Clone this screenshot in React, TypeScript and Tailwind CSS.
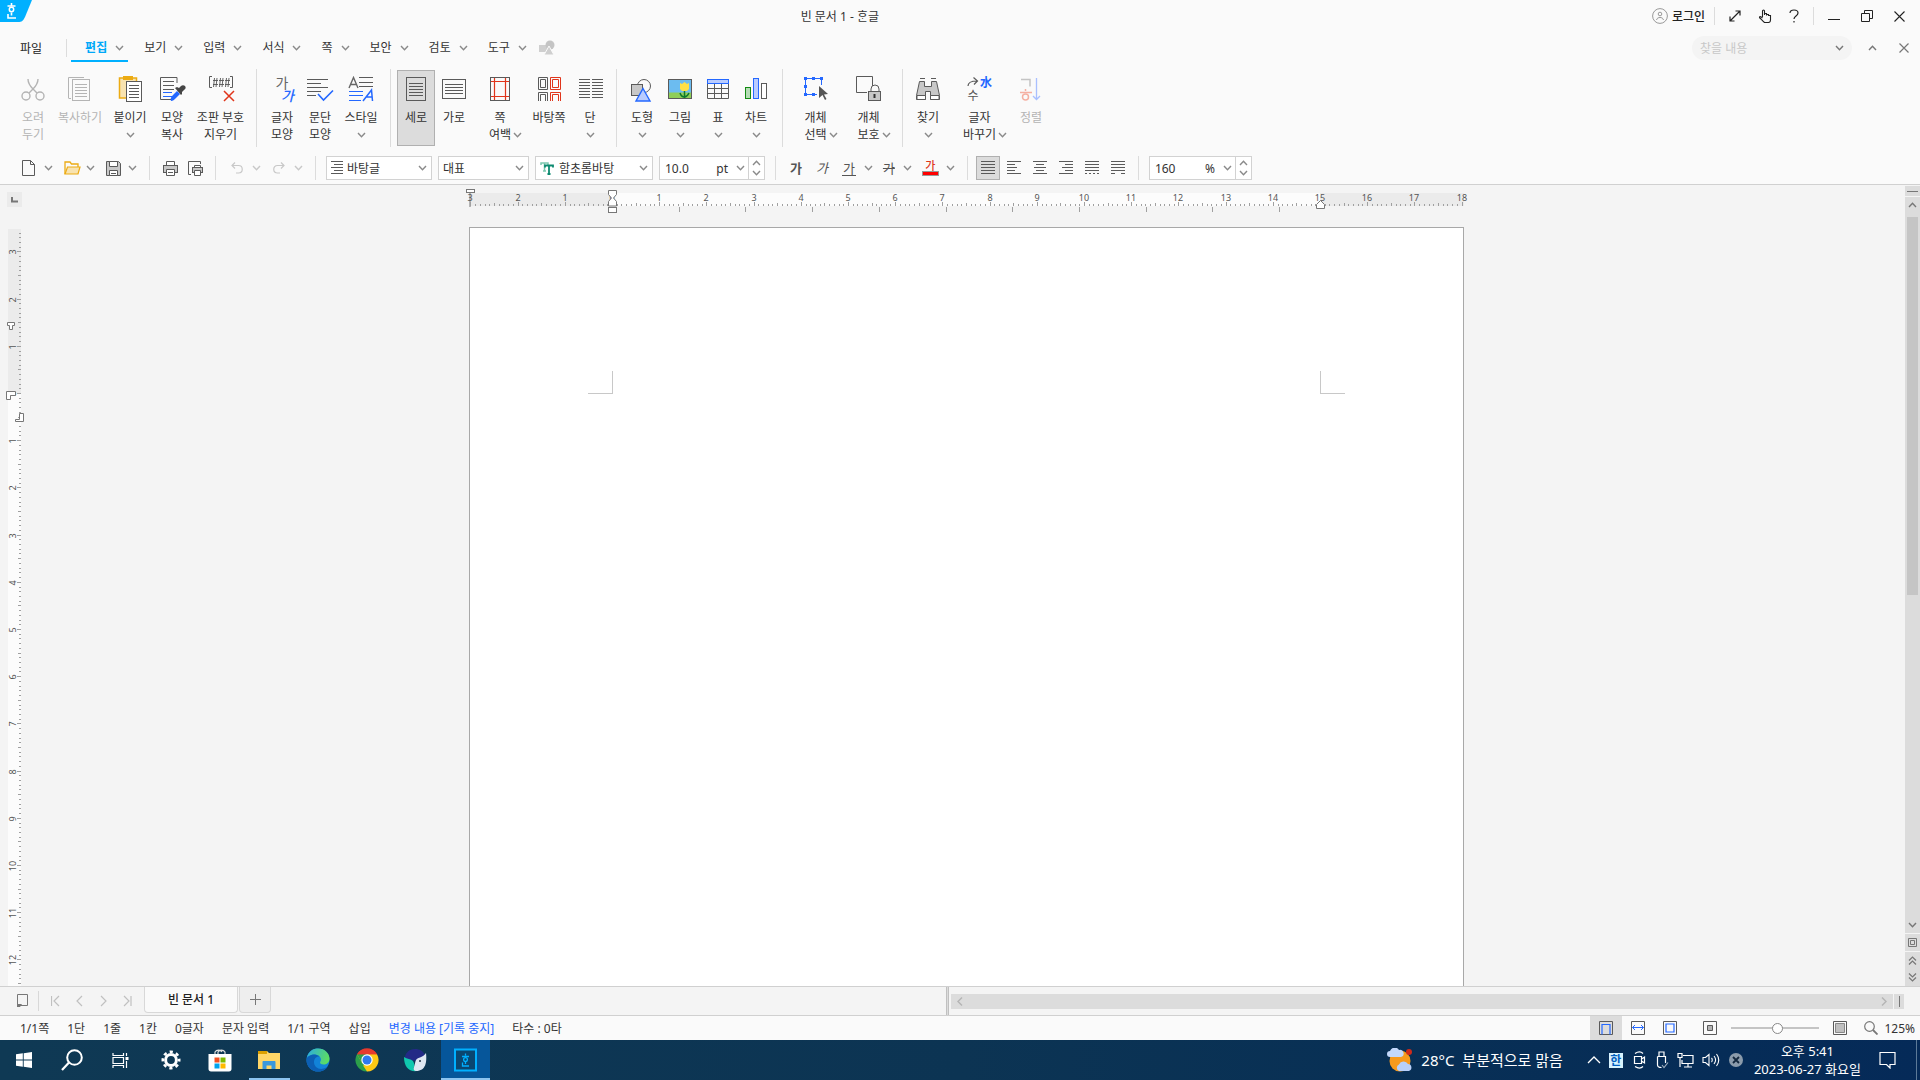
import React from "react";

type Kids = { children?: React.ReactNode };

const G = "#5a5a5a";
const B = "#2468ff";
const R = "#e0351b";

function Svg({ w, h = w, className, children }: Kids & { w: number; h?: number; className?: string }) {
  return (
    <svg width={w} height={h} viewBox={`0 0 ${w} ${h}`} fill="none" className={`shrink-0 ${className ?? ""}`} aria-hidden="true">
      {children}
    </svg>
  );
}

function Chevron({ className = "text-[#8a8a8a]" }: { className?: string }) {
  return (
    <Svg w={9} h={6} className={className}>
      <path d="M1 1l3.500 3.800L8 1" stroke="currentColor" strokeWidth="1.400" />
    </Svg>
  );
}

function Rows({ x1, x2, ys, c = G }: { x1: number; x2: number; ys: number[]; c?: string }) {
  return <path d={ys.map((y) => `M${x1} ${y + 0.5}H${x2}`).join("")} stroke={c} />;
}

/* ---------- ribbon icons ---------- */

const icons: Record<string, React.ReactNode> = {
  cut: (
    <Svg w={26}>
      <g stroke="#b4b4b4" strokeWidth="1.400">
        <circle cx="6" cy="20" r="4" />
        <circle cx="20" cy="20" r="4" />
        <path d="M8 3c0 4 2 7 5 10l4 4M18 3c0 4-2 7-5 10l-4 4" />
      </g>
    </Svg>
  ),
  copy: (
    <Svg w={26}>
      <path d="M1.500 22V1.500H17M1.500 22.500H4" stroke="#b4b4b4" />
      <rect x="5.500" y="3.500" width="17" height="21" stroke="#b4b4b4" fill="#fafafa" />
      <Rows x1={8} x2={20} ys={[8, 11, 14, 17, 20]} c="#b4b4b4" />
    </Svg>
  ),
  paste: (
    <Svg w={26}>
      <rect x="2.500" y="2" width="17" height="20" fill="#f8e3b0" stroke="#ecab13" strokeWidth="1.500" />
      <rect x="6" y="0" width="10" height="4" fill="#ecab13" />
      <rect x="9.500" y="5.500" width="15" height="20" fill="#fff" stroke={G} />
      <Rows x1={12} x2={22} ys={[9, 12, 15, 18, 21]} />
    </Svg>
  ),
  brush: (
    <Svg w={28} h={26}>
      <path d="M19 7V1.500H2.500V23.500H14" stroke={G} />
      <Rows x1={5} x2={16} ys={[5, 9, 13]} />
      <Rows x1={5} x2={14} ys={[16, 20]} c={B} />
      <path d="M13 25c-1-2 0-4 2-6l4-4 3 3-4 4c-2 2-3 3-5 3z" fill={B} />
      <path d="M17 12l2-1 2 1 2-2c1-1 3-1 4 0s1 3-1 4l-2 2v2l-1 1z" fill="#454545" />
    </Svg>
  ),
  marks: (
    <Svg w={28} h={28}>
      <path d="M5 1.500H2.500V12.500H5M23 1.500H25.500V12.500H23" stroke={G} />
      <path d="M6 5.500h5M6 9.500h5M7.500 3l-1 9M10 3l-1 9M12 5.500h5M12 9.500h5M13.500 3l-1 9M16 3l-1 9M18 5.500h5M18 9.500h5M19.500 3l-1 9M22 3l-1 9" stroke="#555" strokeWidth=".9" />
      <path d="M17 16l10 10M27 16L17 26" stroke={R} strokeWidth="1.500" />
    </Svg>
  ),
  para: (
    <Svg w={28} h={26}>
      <Rows x1={1} x2={22} ys={[3, 11]} />
      <Rows x1={1} x2={15} ys={[7, 15]} />
      <Rows x1={1} x2={10} ys={[19]} />
      <path d="M12 18l5.500 6L27 14.500" stroke={B} strokeWidth="1.600" />
    </Svg>
  ),
  style: (
    <Svg w={28} h={26}>
      <path d="M2 12L6.500 1.500 11 12M3.800 8.500h5.700" stroke="#666" strokeWidth="1.400" />
      <Rows x1={12} x2={26} ys={[1, 6, 10]} />
      <Rows x1={2} x2={16} ys={[15, 19]} c={B} />
      <Rows x1={2} x2={14} ys={[24]} c={B} />
      <path d="M16 25l8.500-11 1 11M19.500 21h6" stroke={B} strokeWidth="1.500" />
    </Svg>
  ),
  portrait: (
    <Svg w={26}>
      <rect x="3.500" y="1.500" width="19" height="23" stroke={G} />
      <Rows x1={6} x2={20} ys={[7, 10, 13, 16, 19]} />
    </Svg>
  ),
  landscape: (
    <Svg w={26}>
      <rect x="1.500" y="3.500" width="23" height="19" stroke={G} />
      <Rows x1={4} x2={22} ys={[8, 11, 14, 17]} />
    </Svg>
  ),
  margin: (
    <Svg w={26}>
      <rect x="3.500" y="1.500" width="19" height="23" stroke={G} />
      <path d="M7.500 2v22M18.500 2v22M4 5.500h18M4 20.500h18" stroke={R} strokeWidth="1.200" />
    </Svg>
  ),
  master: (
    <Svg w={26}>
      <path d="M2.500 1.500h9v12h-9zM4.500 3.500h5v8h-5zM2.500 25V16.500h9V25M4.500 25V18.500h5V25" stroke={G} />
      <path d="M14.500 1.500h10v12h-10zM16.500 3.500h6v8h-6zM14.500 25V16.500h10V25M16.500 25V18.500h6V25" stroke={R} />
    </Svg>
  ),
  columns: (
    <Svg w={26}>
      <Rows x1={2} x2={13} ys={[3, 6, 9, 12, 15, 18, 21]} />
      <Rows x1={15} x2={26} ys={[3, 6, 9, 12, 15, 18, 21]} />
    </Svg>
  ),
  shapes: (
    <Svg w={26}>
      <circle cx="15" cy="10" r="6.500" stroke={G} />
      <rect x="2.500" y="8.500" width="11" height="11" fill="#c8c8c8" stroke={G} />
      <path d="M14 12.500L21 25H7z" fill="#b9ccff" stroke={B} strokeWidth="1.400" />
    </Svg>
  ),
  picture: (
    <Svg w={26}>
      <rect x="1.500" y="3.500" width="23" height="19" fill="#6cbcf0" stroke={G} />
      <path d="M2 16.500h22V22H2z" fill="#8fce58" />
      <path d="M17.500 14v8M13 17c1 3 3 4 4.500 4s3-1 4.500-4" stroke="#0d7a2b" strokeWidth="1.500" />
      <path d="M13 7l2 1 2.500-2L20 8l2-1v6l-2 2h-5l-2-2z" fill="#ffe046" />
    </Svg>
  ),
  table: (
    <Svg w={26}>
      <path d="M2.500 8v14.500h21V8M2.500 12.500h21M2.500 17.500h21M9.500 8v14M16.500 8v14" stroke={G} />
      <rect x="2.500" y="3.500" width="21" height="4" fill="#b9ccff" stroke={B} />
    </Svg>
  ),
  chart: (
    <Svg w={26}>
      <rect x="2.500" y="11.500" width="5" height="11" fill="#b4dcb4" stroke="#138a13" />
      <rect x="10.500" y="2.500" width="5" height="20" fill="#b9ccff" stroke={B} />
      <rect x="18.500" y="7.500" width="5" height="15" fill="#fff" stroke={G} />
    </Svg>
  ),
  select: (
    <Svg w={28} h={28}>
      <path d="M19.500 10V3.500H3.500V19.500H15" stroke={B} />
      <path d="M2 2h3v3H2zM10 2h3v3h-3zM18 2h3v3h-3zM2 10h3v3H2zM2 18h3v3H2zM10 18h3v3h-3z" fill={B} />
      <path d="M17 11l9 8-4 .500 2.500 4.500-1.500 1-2.500-5-3.500 3z" fill="#555" />
    </Svg>
  ),
  protect: (
    <Svg w={28} h={28}>
      <path d="M12 17.500H1.500v-16h16V11" stroke={G} />
      <path d="M16 16v-2a4 4 0 018 0v2" stroke={G} />
      <rect x="13.500" y="16.500" width="12" height="9" fill="#c8c8c8" stroke={G} />
      <path d="M19.500 19v4" stroke="#333" strokeWidth="2" />
    </Svg>
  ),
  find: (
    <Svg w={26}>
      <path d="M5 2.500h5M16 2.500h5" stroke={G} />
      <path d="M4.500 5.500h5v5h7v-5h5l3 14v4h-9v-8h-5v8h-9v-4z" fill="#c8c8c8" stroke={G} />
      <path d="M2 19.500h8.500v4H2zM15.500 19.500H24v4h-8.500z" fill="#fff" stroke={G} />
    </Svg>
  ),
  sort: (
    <Svg w={26}>
      <path d="M3 3.500h9v7" stroke="#c4c4c4" strokeWidth="1.500" />
      <path d="M7.500 13v2M2 16.500h12" stroke="#f5b0a2" strokeWidth="1.500" />
      <circle cx="7.500" cy="21" r="3" stroke="#f5b0a2" strokeWidth="1.500" />
      <path d="M18.500 2v21M15 20l3.500 3.500L22 20" stroke="#a9bfff" strokeWidth="1.300" />
    </Svg>
  ),
};

const charIcon = (
  <span className="flex h-[26px] w-6 flex-col text-[14px] leading-[13px]">
    <span className="text-[#666]">가</span>
    <span className="self-end font-medium text-[#2468ff] italic">가</span>
  </span>
);

const replaceIcon = (
  <span className="grid h-[26px] w-[26px] grid-cols-2 text-[12px] leading-[13px]">
    <Svg w={12} h={13}>
      <path d="M1 10c0-3 3-5 9-5M6.500 1.500L10.500 5 7 8.500" stroke={G} strokeWidth="1.200" />
    </Svg>
    <span className="font-bold text-[#2468ff]">水</span>
    <span className="text-[#555]">수</span>
  </span>
);

type RibbonItem = {
  w: string;
  icon: React.ReactNode;
  lines: string[];
  chev?: "below" | "side";
  off?: boolean;
  on?: boolean;
};

const ribbon: RibbonItem[][] = [
  [
    { w: "w-[38px]", icon: icons.cut, lines: ["오려", "두기"], off: true },
    { w: "w-14", icon: icons.copy, lines: ["복사하기"], off: true },
    { w: "w-11", icon: icons.paste, lines: ["붙이기"], chev: "below" },
    { w: "w-10", icon: icons.brush, lines: ["모양", "복사"] },
    { w: "w-[57px]", icon: icons.marks, lines: ["조판 부호", "지우기"] },
  ],
  [
    { w: "w-[38px]", icon: charIcon, lines: ["글자", "모양"] },
    { w: "w-[38px]", icon: icons.para, lines: ["문단", "모양"] },
    { w: "w-11", icon: icons.style, lines: ["스타일"], chev: "below" },
  ],
  [
    { w: "w-[38px]", icon: icons.portrait, lines: ["세로"], on: true },
    { w: "w-[38px]", icon: icons.landscape, lines: ["가로"] },
    { w: "w-[54px]", icon: icons.margin, lines: ["쪽", "여백"], chev: "side" },
    { w: "w-11", icon: icons.master, lines: ["바탕쪽"] },
    { w: "w-[38px]", icon: icons.columns, lines: ["단"], chev: "below" },
  ],
  [
    { w: "w-[38px]", icon: icons.shapes, lines: ["도형"], chev: "below" },
    { w: "w-[38px]", icon: icons.picture, lines: ["그림"], chev: "below" },
    { w: "w-[38px]", icon: icons.table, lines: ["표"], chev: "below" },
    { w: "w-[38px]", icon: icons.chart, lines: ["차트"], chev: "below" },
  ],
  [
    { w: "w-[53px]", icon: icons.select, lines: ["개체", "선택"], chev: "side" },
    { w: "w-[53px]", icon: icons.protect, lines: ["개체", "보호"], chev: "side" },
  ],
  [
    { w: "w-[38px]", icon: icons.find, lines: ["찾기"], chev: "below" },
    { w: "w-[65px]", icon: replaceIcon, lines: ["글자", "바꾸기"], chev: "side" },
    { w: "w-[38px]", icon: icons.sort, lines: ["정렬"], off: true },
  ],
];

function RibbonButton({ item }: { item: RibbonItem }) {
  const last = item.lines.length - 1;
  return (
    <button
      type="button"
      aria-pressed={item.on}
      disabled={item.off}
      className={`flex h-[76px] shrink-0 flex-col items-center border pt-[5px] ${item.w} ${
        item.on ? "border-[#b0b0b0] bg-[#dcdcdc]" : "border-transparent"
      } ${item.off ? "text-[#b4b4b4]" : "text-[#333]"}`}
    >
      <span className="mb-[7px] flex h-[26px] items-center justify-center">{item.icon}</span>
      {item.lines.map((line, i) => (
        <span key={line} className="flex h-[17px] items-center justify-center leading-[17px] whitespace-nowrap">
          {item.chev === "side" && i === last ? (
            <span className="flex items-center gap-0.5 pl-[11px]">
              {line}
              <Chevron />
            </span>
          ) : (
            line
          )}
        </span>
      ))}
      {item.chev === "below" && (
        <span className="flex h-[17px] items-center">
          <Chevron />
        </span>
      )}
    </button>
  );
}

/* ---------- title bar and menu ---------- */

function TitleBar() {
  return (
    <header className="grid h-8 shrink-0 grid-cols-[10fr_auto_13fr] items-center">
      <Svg w={32} h={22} className="self-start">
        <path d="M0 0h32l-7 17c-2 4-3 5-7 5H0z" fill="#00b0ff" />
        <path d="M11.500 3v2.500M7.500 6h8M8 14v4h8M11.500 12.500v3" stroke="#fff" strokeWidth="1.600" />
        <circle cx="11.500" cy="9.500" r="2.200" stroke="#fff" strokeWidth="1.500" />
      </Svg>
      <h1 className="text-[#333]">빈 문서 1 - ᄒᆞᆫ글</h1>
      <div className="flex items-center justify-end pr-[15px] text-[#222]">
        <button type="button" className="flex items-center gap-1 font-medium">
          <Svg w={16}>
            <circle cx="8" cy="8" r="7.400" stroke="#999" />
            <circle cx="8" cy="6" r="1.800" stroke="#999" />
            <path d="M4.500 12c.500-2 2-2.500 3.500-2.500s3 .500 3.500 2.500" stroke="#999" />
          </Svg>
          로그인
        </button>
        <span className="mr-[14px] ml-[9px] h-[18px] w-px bg-[#dcdcdc]" />
        <div className="flex items-center gap-[17px]">
          <button type="button" aria-label="전체 화면">
            <Svg w={12}>
              <path d="M1 11L11 1M6.500 1H11v4.500M1 6.500V11h4.500" stroke="currentColor" strokeWidth="1.200" />
            </Svg>
          </button>
          <button type="button" aria-label="터치 모드">
            <Svg w={14}>
              <path d="M4.500 8V2a1 1 0 012 0v4M6.500 6V4.500h2V6.500M8.500 5.500h2V7M10.500 6.500h2V11c0 1-.5 2.500-2 2.500H6.500C5 12.500 3 10 1.500 8.500c0-1 1-1.500 3 .5" stroke="currentColor" strokeWidth="1.100" />
            </Svg>
          </button>
          <button type="button" aria-label="도움말">
            <Svg w={10} h={14}>
              <path d="M1 4c0-2 1.500-3 4-3s4 1 4 3c0 3-4 3-4 6M5 12v1.500" stroke="currentColor" strokeWidth="1.200" />
            </Svg>
          </button>
        </div>
        <span className="mr-[14px] ml-[14px] h-[18px] w-px bg-[#dcdcdc]" />
        <div className="flex items-center gap-[21px]">
          <button type="button" aria-label="최소화">
            <Svg w={12}>
              <path d="M0 9.500h12" stroke="currentColor" />
            </Svg>
          </button>
          <button type="button" aria-label="이전 크기로">
            <Svg w={12}>
              <path d="M.5 3.500h8v8h-8zM3.500 3V.5h8v8H9" stroke="currentColor" />
            </Svg>
          </button>
          <button type="button" aria-label="닫기">
            <Svg w={11}>
              <path d="M.5.500l10 10M10.500.500l-10 10" stroke="currentColor" strokeWidth="1.100" />
            </Svg>
          </button>
        </div>
      </div>
    </header>
  );
}

function MenuBar() {
  const items = ["편집", "보기", "입력", "서식", "쪽", "보안", "검토", "도구"];
  return (
    <nav className="flex h-8 shrink-0 items-center">
      <button type="button" className="pl-5 text-[#222]">
        파일
      </button>
      <span className="mr-1 ml-6 h-[18px] w-px bg-[#dcdcdc]" />
      <div className="flex gap-0.5">
        {items.map((m, i) => (
          <button
            key={m}
            type="button"
            className={`flex h-7 items-center gap-2 border-b-2 pt-px pr-1 pl-[14px] ${
              i === 0 ? "border-[#00b0ff] font-bold text-[#00a8f8]" : "border-transparent text-[#333]"
            }`}
          >
            {m}
            <Chevron />
          </button>
        ))}
      </div>
      <Svg w={16} className="ml-2">
        <rect x="0" y="5" width="8" height="7" fill="#cfcfcf" />
        <circle cx="11" cy="5" r="4.500" fill="#c4c4c4" />
        <path d="M10 6l5 9H5z" fill="#cfcfcf" stroke="#fafafa" />
      </Svg>
      <div className="ml-auto flex items-center pr-[11px]">
        <label className="flex h-6 w-40 items-center rounded-full bg-[#f4f4f4] px-2">
          <input aria-label="찾을 내용" placeholder="찾을 내용" className="w-full min-w-0 bg-transparent outline-none placeholder:text-[#c8c8c8]" />
          <Chevron className="text-[#777]" />
        </label>
        <button type="button" aria-label="메뉴 접기" className="ml-4">
          <Chevron className="rotate-180 text-[#777]" />
        </button>
        <button type="button" aria-label="문서 닫기" className="ml-[22px]">
          <Svg w={10}>
            <path d="M.5.500l9 9M9.500.500l-9 9" stroke="#777" strokeWidth="1.200" />
          </Svg>
        </button>
      </div>
    </nav>
  );
}

/* ---------- formatting toolbar ---------- */

function Divider() {
  return <span className="h-6 w-px shrink-0 bg-[#dcdcdc]" />;
}

function Picker({ label, value, w, pad, icon }: { label: string; value: string; w: string; pad: string; icon?: React.ReactNode }) {
  return (
    <label className={`relative flex h-6 shrink-0 items-center border border-[#d2d2d2] bg-white ${w}`}>
      {icon && <span className="absolute left-1">{icon}</span>}
      <select aria-label={label} className={`h-full w-full appearance-none bg-transparent text-[#333] outline-none ${pad}`}>
        <option>{value}</option>
      </select>
      <span className="pointer-events-none absolute right-1">
        <Chevron />
      </span>
    </label>
  );
}

function Spin({ label, value, unit, w }: { label: string; value: string; unit: string; w: string }) {
  return (
    <div className={`flex h-6 shrink-0 items-center border border-[#d2d2d2] bg-white text-[#333] ${w}`}>
      <input aria-label={label} defaultValue={value} className="w-0 min-w-0 flex-1 bg-transparent pl-[5px] outline-none" />
      <span className="mr-2">{unit}</span>
      <button type="button" aria-label={`${label} 목록`} className="mr-[3px]">
        <Chevron />
      </button>
      <div className="flex h-full w-4 flex-col items-center justify-evenly border-l border-[#d2d2d2]">
        <button type="button" aria-label={`${label} 늘리기`}>
          <Chevron className="rotate-180 text-[#8a8a8a]" />
        </button>
        <button type="button" aria-label={`${label} 줄이기`}>
          <Chevron />
        </button>
      </div>
    </div>
  );
}

function Tool({ label, gap = "gap-[9px]", chev, faded, children }: Kids & { label: string; gap?: string; chev?: boolean; faded?: boolean }) {
  return (
    <button type="button" aria-label={label} disabled={faded} className={`flex h-6 shrink-0 items-center ${gap}`}>
      {children}
      {chev && <Chevron className={faded ? "text-[#c8c8c8]" : "text-[#8a8a8a]"} />}
    </button>
  );
}

const alignRows: { label: string; rows: [number, number][]; extra?: "dots" | "ends" }[] = [
  { label: "양쪽 정렬", rows: [[0, 14], [0, 14], [0, 14], [0, 14], [0, 14]] },
  { label: "왼쪽 정렬", rows: [[0, 14], [0, 8], [0, 10], [0, 8], [0, 14]] },
  { label: "가운데 정렬", rows: [[0, 14], [3, 11], [1, 13], [3, 11], [0, 14]] },
  { label: "오른쪽 정렬", rows: [[0, 14], [6, 14], [3, 14], [6, 14], [0, 14]] },
  { label: "배분 정렬", rows: [[0, 14], [0, 14], [0, 14], [0, 14]], extra: "dots" },
  { label: "나눔 정렬", rows: [[0, 14], [0, 14], [0, 14], [0, 14]], extra: "ends" },
];

function FormatBar() {
  return (
    <div className="flex h-[33px] shrink-0 items-center border-b border-[#d0d0d0] pl-[22px]">
      <div className="mr-3 flex items-center gap-[11px]">
        <Tool label="새 문서" chev>
          <Svg w={13} h={16}>
            <path d="M.5.500h8l4 4v11H.5zM8.500.500v4h4" stroke={G} />
          </Svg>
        </Tool>
        <Tool label="불러오기" gap="gap-[5px]" chev>
          <Svg w={17} h={14}>
            <path d="M1 13V1h5l1.500 2H14v3" stroke="#ecab13" strokeWidth="1.300" />
            <path d="M1 13l2.500-7H16l-2 7z" fill="#f8e3b0" stroke="#ecab13" strokeWidth="1.200" />
          </Svg>
        </Tool>
        <Tool label="저장" gap="gap-[7px]" chev>
          <Svg w={15}>
            <path d="M.5.500h12l2 2v12H.5z" fill="#c8c8c8" stroke={G} />
            <path d="M3.500.500h8v5h-8zM3.500 9.500h8v5h-8z" fill="#fff" stroke={G} />
            <path d="M5 12.500h5" stroke={G} />
          </Svg>
        </Tool>
      </div>
      <Divider />
      <div className="mr-3 ml-[13px] flex items-center gap-[10px]">
        <Tool label="인쇄">
          <Svg w={15}>
            <path d="M3.500 5V.500h8V5" fill="#fff" stroke={G} />
            <rect x=".5" y="4.500" width="14" height="7" fill="#c8c8c8" stroke={G} />
            <path d="M3.500 8.500h8v6h-8z" fill="#fff" stroke={G} />
            <path d="M5 11.500h5" stroke={G} />
          </Svg>
        </Tool>
        <Tool label="미리 보기">
          <Svg w={15}>
            <path d="M3 13.500H.5V.500h12V3" stroke={G} />
            <path d="M6.500 7V4.500h6V7" fill="#fff" stroke={G} />
            <rect x="4.500" y="6.500" width="10" height="5" fill="#c8c8c8" stroke={G} />
            <path d="M6.500 9.500h6v5h-6z" fill="#fff" stroke={G} />
          </Svg>
        </Tool>
      </div>
      <Divider />
      <div className="mr-3 ml-[15px] flex items-center gap-3">
        <Tool label="되돌리기" chev faded>
          <Svg w={12}>
            <path d="M4 .500L1 3.500l3 3M1 3.500h6.500c5 0 5 7.500 0 7.500H5" stroke="#c8c8c8" strokeWidth="1.200" />
          </Svg>
        </Tool>
        <Tool label="다시 실행" chev faded>
          <Svg w={12}>
            <path d="M8 .500l3 3-3 3M11 3.500H4.500c-5 0-5 7.500 0 7.500H7" stroke="#c8c8c8" strokeWidth="1.200" />
          </Svg>
        </Tool>
      </div>
      <Divider />
      <div className="mr-[10px] ml-[10px] flex items-center gap-1.5">
        <Picker
          label="스타일"
          value="바탕글"
          w="w-[106px]"
          pad="pl-5"
          icon={
            <Svg w={13} h={14}>
              <Rows x1={0} x2={12} ys={[0, 6, 12]} />
              <Rows x1={3} x2={12} ys={[3, 9]} />
            </Svg>
          }
        />
        <Picker label="언어" value="대표" w="w-[91px]" pad="pl-1" />
        <Picker
          label="글꼴"
          value="함초롬바탕"
          w="w-[118px]"
          pad="pl-[23px]"
          icon={
            <Svg w={14} h={13}>
              <path d="M1 3V1h7v2M4.500 1v8M3 9h3" stroke="#7cc8b0" strokeWidth="1.500" />
              <path d="M5 5.500V3.500h8v2M9 3.500V12M7.500 12h3" stroke="#0d8a70" strokeWidth="1.800" />
            </Svg>
          }
        />
        <Spin label="글자 크기" value="10.0" unit="pt" w="w-[106px]" />
      </div>
      <Divider />
      <div className="mr-[10px] ml-[14px] flex items-center gap-[14px] text-[13px] text-[#555]">
        <Tool label="진하게">
          <span className="font-bold">가</span>
        </Tool>
        <Tool label="기울임">
          <span className="italic">가</span>
        </Tool>
        <Tool label="밑줄" gap="gap-2" chev>
          <span className="border-b border-[#555] px-px leading-[14px]">가</span>
        </Tool>
      </div>
      <div className="mr-3 flex items-center gap-[10px] text-[13px] text-[#555]">
        <Tool label="취소선" gap="gap-2" chev>
          <span className="line-through">가</span>
        </Tool>
        <Tool label="글자 색" gap="gap-[7px]" chev>
          <span className="flex w-[17px] flex-col items-center text-[11px] leading-[11px] font-medium text-[#e0351b]">
            가<span className="h-[5px] w-full border border-[#999] bg-[#ff0000]" />
          </span>
        </Tool>
      </div>
      <Divider />
      <div className="mr-2 ml-2 flex items-center gap-0.5">
        {alignRows.map((a, i) => (
          <button
            key={a.label}
            type="button"
            aria-label={a.label}
            aria-pressed={i === 0}
            className={`flex h-6 w-6 items-center justify-center border ${i === 0 ? "border-[#b0b0b0] bg-[#dcdcdc]" : "border-transparent"}`}
          >
            <Svg w={14} h={14}>
              {a.rows.map(([x1, x2], r) => (
                <Rows key={r} x1={x1} x2={x2} ys={[r * 3]} />
              ))}
              {a.extra === "dots" && <path d="M0 12.500h14" stroke={G} strokeDasharray="2 2" />}
              {a.extra === "ends" && <path d="M0 12.500h4M10 12.500h4" stroke={G} />}
            </Svg>
          </button>
        ))}
      </div>
      <Divider />
      <span className="w-[10px]" />
      <Spin label="줄 간격" value="160" unit="%" w="w-[103px]" />
    </div>
  );
}

/* ---------- rulers ---------- */

const CM = 47.2;

function ticks(from: number, to: number) {
  const out: { mm: number; len: number }[] = [];
  for (let mm = from; mm <= to; mm++) {
    out.push({ mm, len: mm % 10 === 0 ? 4 : mm % 5 === 0 ? 3 : 2 });
  }
  return out;
}

function HorizontalRuler() {
  const zero = 143;
  const at = (cm: number) => Math.round(zero + cm * CM);
  return (
    <svg width="995" height="42" className="block shrink-0 overflow-visible" aria-hidden="true">
      <rect x="0" y="8" width="995" height="13" fill="#ebebeb" />
      <rect x={zero} y="8" width={at(15) - zero} height="13" fill="#fcfcfc" />
      <rect x="0" y="8" width="2" height="14" fill="#b4b4b4" />
      {ticks(-30, 180).map((t) => (
        <rect key={t.mm} x={at(t.mm / 10)} y={21 - t.len} width="1" height={t.len} fill="#a0a0a0" />
      ))}
      {Array.from({ length: 10 }, (_, i) => (
        <rect key={i} x={Math.round(zero + (i + 1) * 66.7)} y="22" width="1" height="5" fill="#a0a0a0" />
      ))}
      {Array.from({ length: 22 }, (_, i) => i - 3).map((n) => (
        <text key={n} x={at(n)} y="16" textAnchor="middle" fontSize="9" fill="#555">
          {Math.abs(n)}
        </text>
      ))}
      <g fill="#fff" stroke="#777">
        <rect x="-2.500" y="4.500" width="8" height="3" />
        <path d="M139.500 5.500h8v4l-3 3.500 3 3.500v4.500h-8v-4.500l3-3.500-3-3.500z" />
        <rect x="139.500" y="22.500" width="8" height="5" />
        <path d="M847.500 23.500v-4l4-4 4 4v4z" />
      </g>
    </svg>
  );
}

function VerticalRuler() {
  const zero = 164;
  const at = (cm: number) => Math.round(zero + cm * CM);
  return (
    <svg width="25" height="100%" className="block min-h-0 flex-1" aria-hidden="true">
      <rect x="8" y="0" width="13" height="100%" fill="#fcfcfc" />
      <rect x="8" y="0" width="13" height={zero} fill="#ebebeb" />
      {ticks(-34, 240).map((t) => (
        <rect key={t.mm} x={21 - t.len} y={at(t.mm / 10)} width={t.len} height="1" fill="#a0a0a0" />
      ))}
      {Array.from({ length: 16 }, (_, i) => i - 3).map((n) => (
        <text key={n} transform={`translate(16 ${at(n) + 1}) rotate(-90)`} textAnchor="middle" fontSize="9" fill="#555">
          {Math.abs(n)}
        </text>
      ))}
      <g fill="#fff" stroke="#777">
        <path d="M7.500 93.500h7v3h-2v4h-3v-4h-2z" />
        <path d="M6.500 162.500h9v4h-5v4h-4z" />
        <path d="M15.500 190.500h4v-6h4v8h-8z" />
      </g>
    </svg>
  );
}

function ScrollColumn() {
  return (
    <div className="flex w-[15px] shrink-0 flex-col gap-px pt-px text-[#777]">
      <button type="button" aria-label="창 나누기" className="flex h-[10px] items-center justify-center bg-[#dcdcdc]">
        <span className="h-px w-[11px] bg-[#777]" />
      </button>
      <div className="flex min-h-0 flex-1 flex-col bg-[#dcdcdc]">
        <button type="button" aria-label="위로" className="flex h-5 items-center justify-center pb-1">
          <Chevron className="rotate-180 text-[#777]" />
        </button>
        <div className="min-h-0 flex-1 px-0.5">
          <div className="h-[54%] bg-[#c5c5c5]" />
        </div>
        <button type="button" aria-label="아래로" className="flex h-4 items-center justify-center">
          <Chevron className="text-[#777]" />
        </button>
      </div>
      <button type="button" aria-label="보기 선택" className="flex h-[17px] items-center justify-center bg-[#dcdcdc]">
        <Svg w={9}>
          <path d="M.5.500h8v8h-8zM2.500 2.500h4v4h-4z" stroke="#777" />
        </Svg>
      </button>
      <div className="flex flex-col bg-[#dcdcdc]">
        <button type="button" aria-label="이전 쪽" className="flex h-[17px] items-center justify-center">
          <Svg w={9} h={9}>
            <path d="M1 4.500L4.500 1 8 4.500M1 8.500L4.500 5 8 8.500" stroke="#777" strokeWidth="1.200" />
          </Svg>
        </button>
        <button type="button" aria-label="다음 쪽" className="flex h-[17px] items-center justify-center">
          <Svg w={9} h={9}>
            <path d="M1 .500L4.500 4 8 .500M1 4.500L4.500 8 8 4.500" stroke="#777" strokeWidth="1.200" />
          </Svg>
        </button>
      </div>
    </div>
  );
}

function Workspace() {
  return (
    <main className="flex min-h-0 flex-1 bg-[#f4f4f4]">
      <div className="flex w-[25px] shrink-0 flex-col overflow-hidden">
        <div className="mt-[7px] mb-[22px] ml-[7px] h-[15px] w-[15px] shrink-0 bg-[#ebebeb]">
          <Svg w={15}>
            <path d="M5 5v4.500h6" stroke="#777" strokeWidth="2" />
          </Svg>
        </div>
        <VerticalRuler />
      </div>
      <div className="flex min-w-0 flex-1 justify-center overflow-hidden pl-0.5">
        <div className="flex w-[995px] shrink-0 flex-col">
          <HorizontalRuler />
          <article className="flex min-h-0 flex-1 items-start justify-between border border-b-0 border-[#a8a8a8] bg-white px-[118px] pt-[143px]">
            <span className="h-[23px] w-[25px] border-r border-b border-[#c8c8c8]" />
            <span className="h-[23px] w-[25px] border-b border-l border-[#c8c8c8]" />
          </article>
        </div>
      </div>
      <ScrollColumn />
    </main>
  );
}

/* ---------- document tabs and status bar ---------- */

function TabStrip() {
  const nav: [string, string][] = [
    ["처음 탭", "M.5 1v10M8 1L3 6l5 5"],
    ["이전 탭", "M7 1L2 6l5 5"],
    ["다음 탭", "M2 1l5 5-5 5"],
    ["마지막 탭", "M8 1v10M1 1l5 5-5 5"],
  ];
  return (
    <div className="flex h-[29px] shrink-0 border-t border-[#d0d0d0] bg-[#f4f4f4]">
      <div className="flex w-36 shrink-0 items-center pl-[17px]">
        <button type="button" aria-label="탭 목록">
          <Svg w={12} h={14}>
            <path d="M.5.500h10v11H.5z" stroke="#777" />
            <path d="M0 10h5l-2 3H0z" fill="#777" />
          </Svg>
        </button>
        <span className="mr-3 ml-[9px] h-5 w-px bg-[#d8d8d8]" />
        <div className="flex gap-[15px]">
          {nav.map(([label, d]) => (
            <button key={label} type="button" aria-label={label}>
              <Svg w={9} h={12}>
                <path d={d} stroke="#c0c0c0" strokeWidth="1.200" />
              </Svg>
            </button>
          ))}
        </div>
      </div>
      <button type="button" className="mr-px h-[26px] w-[94px] shrink-0 rounded-b border border-t-0 border-[#d8d8d8] bg-[#fafafa] font-medium text-[#222]">
        빈 문서 1
      </button>
      <button type="button" aria-label="새 탭" className="flex h-[26px] w-8 shrink-0 items-center justify-center rounded-b border border-t-0 border-[#d8d8d8] bg-[#eeeeee]">
        <Svg w={11}>
          <path d="M5.500 0v11M0 5.500h11" stroke="#777" />
        </Svg>
      </button>
      <div className="flex-[676]" />
      <span className="w-[3px] border-x border-[#c0c0c0] bg-[#dcdcdc]" />
      <div className="mr-4 ml-0.5 flex flex-[954] items-center gap-px">
        <div className="flex h-[15px] flex-1 items-center justify-between bg-[#dcdcdc] px-1.5">
          <button type="button" aria-label="왼쪽으로">
            <Svg w={6} h={9}>
              <path d="M5 .500l-4 4 4 4" stroke="#b4b4b4" strokeWidth="1.400" />
            </Svg>
          </button>
          <button type="button" aria-label="오른쪽으로">
            <Svg w={6} h={9}>
              <path d="M1 .500l4 4-4 4" stroke="#b4b4b4" strokeWidth="1.400" />
            </Svg>
          </button>
        </div>
        <button type="button" aria-label="세로로 나누기" className="flex h-[15px] w-[10px] items-center justify-center bg-[#dcdcdc]">
          <span className="h-[11px] w-px bg-[#777]" />
        </button>
      </div>
    </div>
  );
}

function StatusBar() {
  const left = ["1/1쪽", "1단", "1줄", "1칸", "0글자", "문자 입력", "1/1 구역", "삽입"];
  return (
    <footer className="flex h-[25px] shrink-0 items-center border-t border-[#d0d0d0] text-[#333]">
      <div className="flex items-center gap-[18px] pl-5 whitespace-nowrap">
        {left.map((t) => (
          <span key={t}>{t}</span>
        ))}
        <button type="button" className="text-[#2468ff]">
          변경 내용 [기록 중지]
        </button>
        <span>타수 : 0타</span>
      </div>
      <div className="ml-auto flex h-full items-center pr-[5px]">
        <button type="button" aria-label="쪽 윤곽" aria-pressed="true" className="flex h-full w-8 items-center justify-center bg-[#dcdcdc]">
          <Svg w={14}>
            <path d="M.5.500h13v13H.5z" stroke={G} />
            <path d="M3 13.500v-10h8v10" stroke={B} strokeWidth="1.200" />
          </Svg>
        </button>
        <button type="button" aria-label="폭 맞춤" className="flex h-full w-8 items-center justify-center">
          <Svg w={14}>
            <path d="M.5.500h13v13H.5z" stroke={G} />
            <path d="M1.500 6.500h11M4 4L1.500 6.500 4 9M10 4l2.500 2.500L10 9" stroke={B} />
          </Svg>
        </button>
        <button type="button" aria-label="쪽 맞춤" className="flex h-full w-8 items-center justify-center">
          <Svg w={14}>
            <path d="M.5.500h13v13H.5z" stroke={G} />
            <path d="M3 3h8v8H3z" stroke={B} strokeWidth="1.200" />
          </Svg>
        </button>
        <button type="button" aria-label="축소" className="ml-[17px]">
          <Svg w={14}>
            <path d="M.5.500h13v13H.5z" stroke={G} />
            <path d="M4.500 4.500h5v5h-5z" fill="#b4b4b4" stroke={G} />
          </Svg>
        </button>
        <input
          type="range"
          aria-label="확대 비율"
          min={0}
          max={100}
          defaultValue={53}
          className="mx-[14px] h-[11px] w-[88px] appearance-none bg-[linear-gradient(#c4c4c4,#c4c4c4)] bg-[length:100%_2px] bg-center bg-no-repeat [&::-webkit-slider-thumb]:h-[11px] [&::-webkit-slider-thumb]:w-[11px] [&::-webkit-slider-thumb]:appearance-none [&::-webkit-slider-thumb]:rounded-full [&::-webkit-slider-thumb]:border [&::-webkit-slider-thumb]:border-[#888] [&::-webkit-slider-thumb]:bg-white"
        />
        <button type="button" aria-label="확대">
          <Svg w={14}>
            <path d="M.5.500h13v13H.5z" stroke={G} />
            <path d="M2.500 2.500h9v9h-9z" fill="#c0c0c0" stroke="#888" />
          </Svg>
        </button>
        <button type="button" className="ml-[17px] flex items-center gap-1.5">
          <Svg w={14}>
            <circle cx="5.500" cy="5.500" r="4.800" stroke="#777" strokeWidth="1.200" />
            <path d="M9 9l4.500 4.500" stroke="#777" strokeWidth="1.800" />
          </Svg>
          125%
        </button>
      </div>
    </footer>
  );
}

/* ---------- desktop taskbar ---------- */

const apps: { label: string; state?: "open" | "active"; icon: React.ReactNode }[] = [
  {
    label: "시작",
    icon: (
      <Svg w={16}>
        <path d="M0 2.300L6.800 1.300V7.600H0zM7.700 1.200L16 0v7.600H7.700zM0 8.400h6.800v6.300L0 13.700zM7.700 8.400H16V16l-8.300-1.200z" fill="#fff" />
      </Svg>
    ),
  },
  {
    label: "검색",
    icon: (
      <Svg w={24} h={22}>
        <circle cx="13.500" cy="8.500" r="7.300" stroke="#fff" strokeWidth="2" />
        <path d="M8 13.500L1 21" stroke="#fff" strokeWidth="2.200" />
      </Svg>
    ),
  },
  {
    label: "작업 보기",
    icon: (
      <Svg w={20} h={17}>
        <path d="M1 1v2.500h10.500V1M1 5.500h10.500v6H1zM1 16v-2.500h10.500V16M14.500 1v3M14.500 9v7" stroke="#fff" strokeWidth="1.200" />
        <rect x="13.500" y="5" width="3" height="3" fill="#fff" />
      </Svg>
    ),
  },
  {
    label: "설정",
    icon: (
      <Svg w={20}>
        <circle cx="10" cy="10" r="5.400" stroke="#fff" strokeWidth="3" />
        <circle cx="10" cy="10" r="8.200" stroke="#fff" strokeWidth="2.600" strokeDasharray="3.220 3.220" strokeDashoffset="1.600" />
      </Svg>
    ),
  },
  {
    label: "스토어",
    icon: (
      <Svg w={24}>
        <path d="M7 6V4a4 3.500 0 017 0M10 6V4a4 3.500 0 017 0v2" stroke="#ddd" strokeWidth="1.200" />
        <path d="M.5 6h23v15c0 1.500-1 2.500-2.500 2.500H3C1.500 23.500.5 22.500.5 21z" fill="#fff" />
        <path d="M6.500 9.500h5v5h-5z" fill="#f25022" />
        <path d="M12.500 9.500h5v5h-5z" fill="#7fba00" />
        <path d="M6.500 15.500h5v5h-5z" fill="#00a4ef" />
        <path d="M12.500 15.500h5v5h-5z" fill="#ffb900" />
      </Svg>
    ),
  },
  {
    label: "파일 탐색기",
    state: "open",
    icon: (
      <Svg w={22} h={20}>
        <path d="M0 1h9l2 2h11v16H0z" fill="#ffd667" />
        <path d="M0 1h9v3H0z" fill="#dca000" />
        <path d="M4.500 19v-7c0-.6.400-1 1-1h11c.6 0 1 .4 1 1v7h-4v-3.500h-5V19z" fill="#3a98dd" />
      </Svg>
    ),
  },
  {
    label: "엣지",
    icon: (
      <Svg w={24}>
        <defs>
          <linearGradient id="edgeTop" x1="0" y1="0" x2="24" y2="10" gradientUnits="userSpaceOnUse">
            <stop stopColor="#28a8e8" />
            <stop offset="1" stopColor="#5fe05a" />
          </linearGradient>
        </defs>
        <circle cx="12" cy="12" r="11.500" fill="#1283d8" />
        <path d="M1 9C3 3 7 .500 12 .500c7 0 11.500 5 11.500 10 0 4-3 6-6 6-2 0-3.500-1-3.500-2 0-.8 1-1.500 1-3C15 9 12 6.500 8.500 6.500 5 6.500 2.500 8 1 9z" fill="url(#edgeTop)" />
        <path d="M8 14c0 5 4.500 8 10 6.500 1.500-.4 3-1.500 3.500-1.500-2 3-5.500 4.500-9.500 4.500C5 23.500.500 18 .500 12.500.500 9 4 6.500 8.500 6.500c2 0 4 1 5 2-3-.5-5.500 2-5.500 5.500z" fill="#0c5fb4" />
      </Svg>
    ),
  },
  {
    label: "크롬",
    icon: (
      <Svg w={24}>
        <path d="M12 12L2.040 6.250A11.500 11.500 0 0121.960 6.250z" fill="#e53a2e" />
        <path d="M12 12L21.960 6.250A11.500 11.500 0 0112 23.500z" fill="#fdc914" />
        <path d="M12 12V23.500A11.500 11.500 0 012.040 6.250z" fill="#2c9f4a" />
        <path d="M12 6.250h9.960L17 15zM7 15L2.040 6.250 12 12z" fill="#fdc914" />
        <path d="M2.040 6.250L7 15l5-8.700z" fill="#2c9f4a" />
        <path d="M2.040 6.250L12 6.250l9.960 0A11.500 11.500 0 002.040 6.250z" fill="#e53a2e" />
        <path d="M17 15l-5 8.500-4-6z" fill="#fdc914" />
        <circle cx="12" cy="12" r="5.700" fill="#fff" />
        <circle cx="12" cy="12" r="4.500" fill="#2f7af0" />
      </Svg>
    ),
  },
  {
    label: "웨일",
    icon: (
      <Svg w={26} h={24}>
        <path d="M2 10C2 5 6 1 12 1c5 0 8 2 10 6l-1 4c-2-1-5-1-7 1-3 1-9 1-12-2z" fill="#232a86" />
        <path d="M1 9c3 2 7 2 9 4 1 2 2 4 1 6-1 2 1 3 3 4C6 24 1 19 1 9z" fill="#10c8ae" />
        <path d="M23 5c1 9 0 18-10 18-2 0-3-2-2-4 1-3 1-5 2-7 2-3 7-2 10-7z" fill="#dfe8f2" />
        <circle cx="17" cy="13" r="1" fill="#234" />
      </Svg>
    ),
  },
  {
    label: "문서 편집기",
    state: "active",
    icon: (
      <Svg w={23} h={24}>
        <rect x="1" y="1.500" width="21" height="21" fill="#0a4670" stroke="#00b0ff" strokeWidth="2" />
        <path d="M11.500 5.500v2M8 8.500h7M11.500 14v2M8.500 14.500v3.500h6.500" stroke="#00b0ff" strokeWidth="1.300" />
        <circle cx="11.500" cy="11.500" r="1.900" stroke="#00b0ff" strokeWidth="1.300" />
      </Svg>
    ),
  },
];

function Taskbar() {
  return (
    <div className="flex h-10 shrink-0 items-center bg-gradient-to-r from-[#0f3954] via-[#0c3453] to-[#052a58] text-white">
      <div className="flex h-full">
        {apps.map((a) => (
          <button
            key={a.label}
            type="button"
            aria-label={a.label}
            className={`relative flex h-full w-[49px] items-center justify-center pr-px ${a.state === "active" ? "bg-[#06569a]" : ""}`}
          >
            {a.icon}
            {a.state && <span className={`absolute bottom-0 h-0.5 bg-[#8cc4f0] ${a.state === "active" ? "inset-x-0" : "inset-x-1"}`} />}
          </button>
        ))}
      </div>
      <button type="button" className="ml-auto flex items-center gap-2 text-[15px]">
        <Svg w={26} h={24}>
          <circle cx="13" cy="13" r="10.500" fill="#f79a1c" />
          <circle cx="22" cy="4" r="3" fill="#d02a1a" />
          <path d="M3 9a3 3 0 010-6 5 5 0 019-1 3.500 3.500 0 012 7z" fill="#c3d8fb" />
          <path d="M12 23a3.500 3.500 0 010-6.500 5 5 0 019-.5 3.600 3.600 0 011 7z" fill="#b8d0fa" />
        </Svg>
        28°C <span>부분적으로 맑음</span>
      </button>
      <div className="ml-6 flex items-center gap-2">
        <Svg w={14} h={8}>
          <path d="M1 7l6-6 6 6" stroke="#fff" strokeWidth="1.300" />
        </Svg>
        <span className="flex h-[15px] w-[14px] items-center justify-center bg-[#d8f4ff] text-[12px] leading-[15px] font-bold text-[#0060c0]">한</span>
        <Svg w={16} h={18}>
          <path d="M4 2.500c3-2 6-2 8 0M4 15.500c3 2 6 2 8 0M3.500 5.500h7v7h-7zM10.500 8l3-2v6l-3-2" stroke="#fff" strokeWidth="1.200" />
        </Svg>
        <Svg w={14} h={18}>
          <path d="M4 5V1h5v4M2.500 5.500h8V12M2.500 5.500V14c0 2 1 2.500 4 2.500" stroke="#fff" strokeWidth="1.200" />
          <path d="M7 14l2 2.500 4-5" stroke="#9ab" strokeWidth="1.200" />
        </Svg>
        <Svg w={17} h={16}>
          <path d="M6 3.500h10v8H5V8M11 12v3M7 15h8M1 1.500h4v4H1zM3 6v9" stroke="#fff" strokeWidth="1.200" />
        </Svg>
        <Svg w={18} h={16}>
          <path d="M1 5.500h2.500L7 2.500v11L3.500 10.500H1zM9.500 6c1 1 1 3 0 4M12 4c2 2.500 2 5.500 0 8M14.500 2c3 4 3 8 0 12" stroke="#fff" strokeWidth="1.100" />
        </Svg>
        <Svg w={16}>
          <circle cx="8" cy="8" r="7" fill="#8b9bab" />
          <path d="M5 5l6 6M11 5l-6 6" stroke="#14283e" strokeWidth="1.800" />
        </Svg>
      </div>
      <div className="ml-[10px] text-center text-[13px] leading-[18px] whitespace-nowrap">
        <div>오후 5:41</div>
        <div>2023-06-27 화요일</div>
      </div>
      <button type="button" aria-label="알림" className="ml-[18px]">
        <Svg w={17} h={18}>
          <path d="M1 1.500h15v12h-5v3.500l-3.500-3.500H1z" stroke="#fff" strokeWidth="1.200" />
        </Svg>
      </button>
      <span className="mr-[3px] ml-5 h-full w-px bg-[#5c7a98]" />
    </div>
  );
}

export default function App() {
  return (
    <div className="flex h-screen flex-col overflow-hidden bg-[#fafafa] font-['Noto_Sans','Noto_Sans_CJK_KR',sans-serif] text-[12px] leading-[17px]">
      <TitleBar />
      <MenuBar />
      <div className="flex h-[88px] shrink-0 items-center pl-[14px]">
        {ribbon.map((group, i) => (
          <React.Fragment key={i}>
            {i > 0 && <span className="mr-1.5 ml-[7px] h-[78px] w-px shrink-0 bg-[#dcdcdc]" />}
            {group.map((item) => (
              <RibbonButton key={item.lines.join()} item={item} />
            ))}
          </React.Fragment>
        ))}
      </div>
      <FormatBar />
      <Workspace />
      <TabStrip />
      <StatusBar />
      <Taskbar />
    </div>
  );
}
